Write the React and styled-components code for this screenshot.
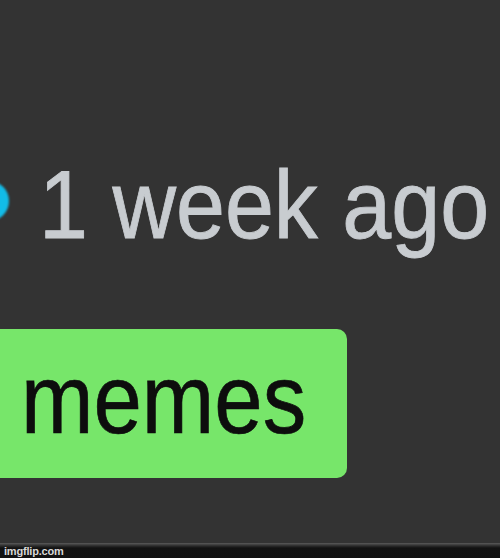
import React from "react";
import styled, { createGlobalStyle } from "styled-components";

const GlobalStyle = createGlobalStyle`
  html, body {
    margin: 0;
    padding: 0;
    background: #333333;
    overflow: hidden;
  }
`;

const Page = styled.div`
  width: 500px;
  height: 558px;
  display: flex;
  flex-direction: column;
  background: #333333;
  font-family: "Liberation Sans", Arial, sans-serif;
  overflow: hidden;
`;

const Content = styled.div`
  flex: 1;
  display: flex;
  flex-direction: column;
  align-items: flex-start;
  padding-top: 155px;
`;

const DateRow = styled.div`
  display: flex;
  align-items: center;
  height: 100px;
  gap: 30px;
  margin-left: -31px;
`;

const Dot = styled.span`
  width: 40px;
  height: 40px;
  margin-top: -8px;
  border-radius: 50%;
  background: #12bce8;
  filter: blur(1px);
  flex-shrink: 0;
`;

const DateText = styled.span`
  display: inline-block;
  font-size: 88px;
  line-height: 100px;
  color: #c8ccd0;
  -webkit-text-stroke: 0.8px #c8ccd0;
  transform: scaleY(1.1);
  white-space: nowrap;
`;

const Tag = styled.div`
  margin-top: 74px;
  margin-left: -10px;
  width: 357px;
  height: 149px;
  box-sizing: border-box;
  padding: 0 0 10px 31px;
  display: flex;
  align-items: center;
  background: #77e66a;
  border-radius: 10px;
`;

const TagText = styled.span`
  display: inline-block;
  font-size: 87px;
  line-height: 87px;
  color: #0d0d0d;
  -webkit-text-stroke: 0.6px #0d0d0d;
  transform: scaleY(1.13);
`;

const Footer = styled.div`
  height: 15px;
  display: flex;
  align-items: center;
  padding-left: 4px;
  background: linear-gradient(#5a5a5a 0px, #2a2a2a 3px, #121212 5px, #111111);
`;

const Watermark = styled.span`
  font-size: 11px;
  font-weight: bold;
  color: #d8d8d8;
  letter-spacing: -0.2px;
`;

export default function App() {
  return (
    <>
      <GlobalStyle />
      <Page>
        <Content>
          <DateRow>
            <Dot />
            <DateText>1 week ago</DateText>
          </DateRow>
          <Tag>
            <TagText>memes</TagText>
          </Tag>
        </Content>
        <Footer>
          <Watermark>imgflip.com</Watermark>
        </Footer>
      </Page>
    </>
  );
}
